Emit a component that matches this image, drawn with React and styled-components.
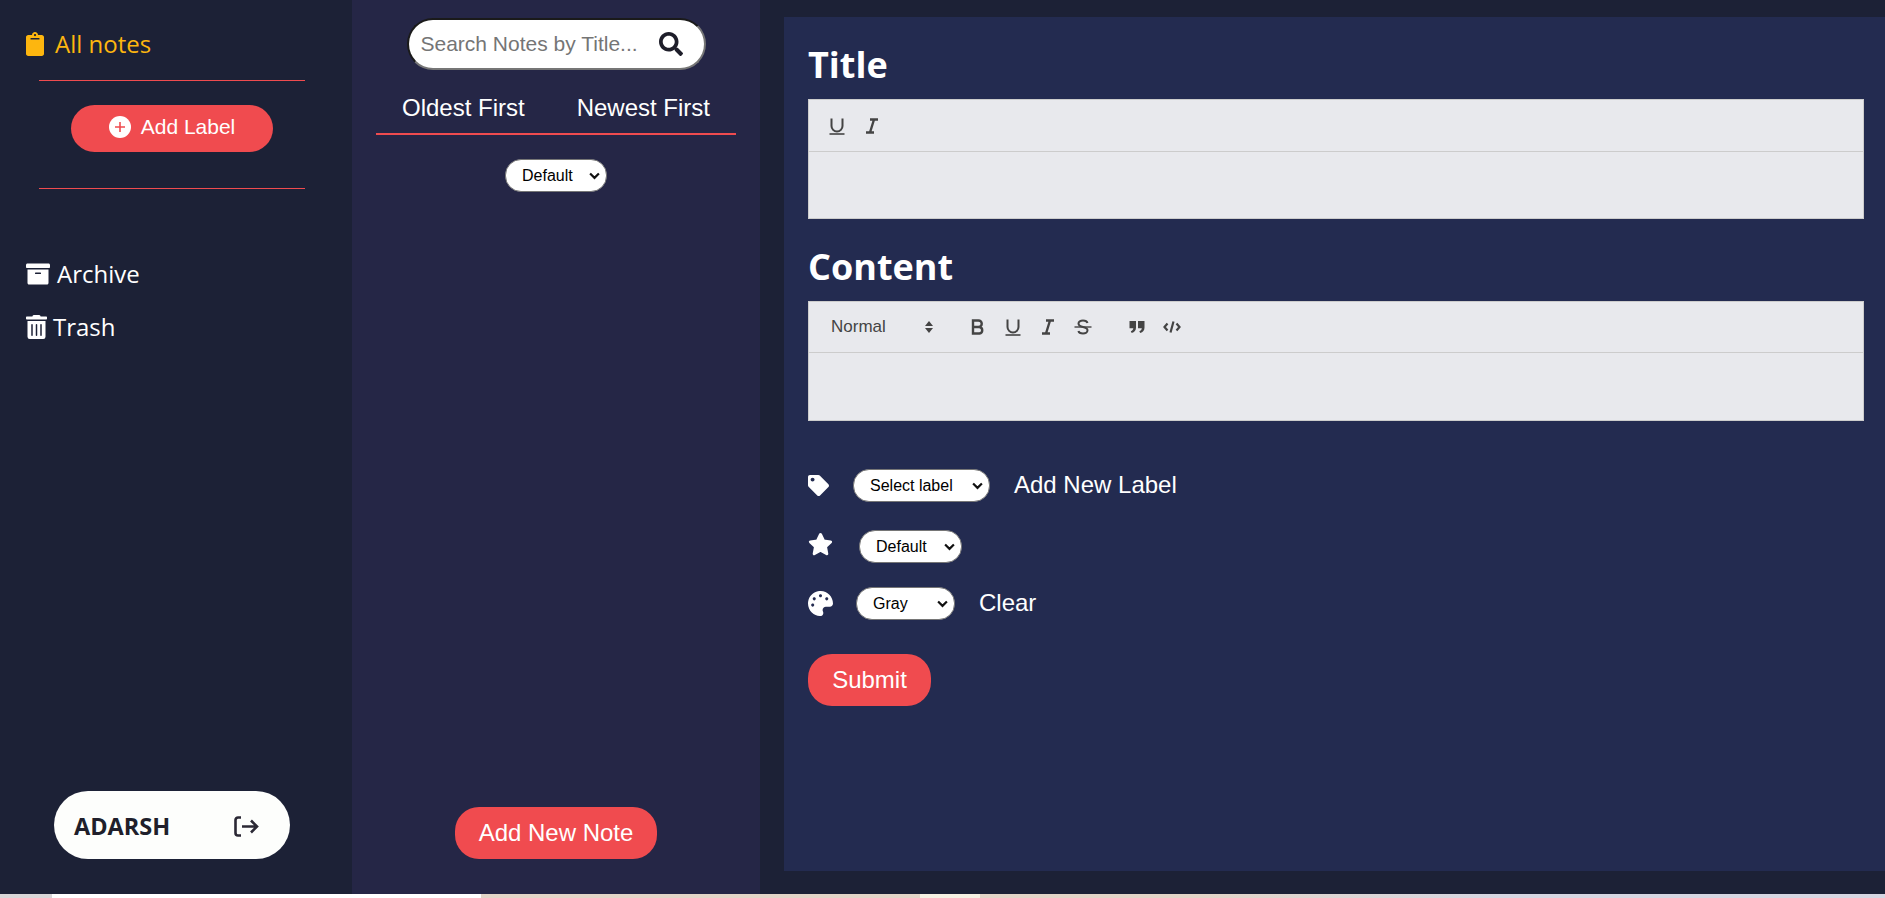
import styled, { createGlobalStyle } from "styled-components";
import {
  FaClipboard,
  FaArchive,
  FaTrashAlt,
  FaSearch,
  FaTag,
  FaPalette,
} from "react-icons/fa";

const chevron =
  "data:image/svg+xml,%3Csvg xmlns='http://www.w3.org/2000/svg' viewBox='0 0 12 8'%3E%3Cpath d='M1.200 1.200 6 6l4.800-4.800' fill='none' stroke='%23111' stroke-width='2.400'/%3E%3C/svg%3E";

const GlobalStyle = createGlobalStyle`
  * {
    box-sizing: border-box;
  }
  html, body {
    margin: 0;
    padding: 0;
    height: 100%;
    overflow: hidden;
    background: #dcd9dc;
    font-family: "Liberation Sans", Arial, sans-serif;
  }
`;

const Page = styled.div`
  display: grid;
  grid-template-columns: 352px 408px 1fr;
  height: 894px;
  background: #1c2136;
  color: #fff;
`;

const Sidebar = styled.aside`
  background: #1c2136;
  display: flex;
  flex-direction: column;
  padding: 27px 0 35px;
`;

const NavItem = styled.div`
  display: flex;
  align-items: center;
  padding-left: 26px;
  gap: ${(p) => p.$gap}px;
  font-family: "Open Sans", sans-serif;
  font-size: 24px;
  line-height: 33px;
  color: ${(p) => (p.$active ? "#fdb60f" : "#fff")};
  margin-top: ${(p) => p.$top || 0}px;

  svg {
    width: ${(p) => p.$iconWidth}px;
    height: 24px;
  }
`;

const Rule = styled.hr`
  width: 266px;
  height: 1px;
  border: 0;
  background: #ef4b4f;
  margin: ${(p) => p.$top}px 0 0 39px;
`;

const RedButton = styled.button`
  border: 0;
  border-radius: ${(p) => p.$radius || 24}px;
  background: #f04b4f;
  color: #fff;
  font-family: "Liberation Sans", Arial, sans-serif;
  font-size: ${(p) => p.$size || 24}px;
  display: inline-flex;
  align-items: center;
  justify-content: center;
  gap: 10px;
  padding: 0 0 ${(p) => p.$lift || 0}px;
  width: ${(p) => p.$w}px;
  height: ${(p) => p.$h}px;
  margin-top: ${(p) => p.$top || 0}px;
`;

const AddLabelRow = styled.div`
  display: flex;
  justify-content: center;
  padding-right: 8px;
`;

const UserPill = styled.div`
  margin: auto 0 0 54px;
  width: 236px;
  height: 68px;
  border-radius: 34px;
  background: #fdfefc;
  color: #201f2b;
  display: flex;
  align-items: center;
  justify-content: space-between;
  padding: 2px 31px 0 20px;
  font-family: "Open Sans", sans-serif;
  font-weight: 700;
  font-size: 23.5px;
`;

const NotesColumn = styled.section`
  background: #252646;
  display: flex;
  flex-direction: column;
  align-items: center;
  padding: 18px 0 35px;
`;

const SearchBox = styled.div`
  width: 299px;
  height: 52px;
  border-radius: 26px;
  background: #fff;
  border: 2px solid;
  border-color: #1a1a1a #767676 #767676 #1a1a1a;
  display: flex;
  align-items: center;
  justify-content: space-between;
  padding: 0 21px 0 12px;
  color: #1e1e2a;
`;

const SearchInput = styled.input`
  border: 0;
  outline: 0;
  width: 225px;
  background: transparent;
  font-family: "Liberation Sans", Arial, sans-serif;
  font-size: 21px;
  padding: 0;
  &::placeholder {
    color: #757575;
    opacity: 1;
  }
`;

const SortTabs = styled.div`
  width: 360px;
  display: flex;
  justify-content: space-between;
  padding: 24px 26px 12px 26px;
  border-bottom: 2px solid #ef4b4f;
  font-size: 24px;
  line-height: 27px;
`;

const PillSelect = styled.select`
  appearance: none;
  border-radius: 16px;
  border: 1px solid #767676;
  background: #fff url("${chevron}") no-repeat right 6px center / 11px 8px;
  color: #000;
  font-family: "Liberation Sans", Arial, sans-serif;
  font-size: 16px;
  height: 33px;
  width: ${(p) => p.$w}px;
  padding: 0 0 0 16px;
  flex: none;
`;

const DefaultFilter = styled(PillSelect)`
  margin-top: 24px;
`;

const AddNoteRow = styled.div`
  margin-top: auto;
`;

const MainArea = styled.main`
  background: #1c2136;
  padding: 17px 0 23px 24px;
  display: flex;
`;

const EditorPanel = styled.div`
  flex: 1;
  background: #232b50;
  padding: 24px 21px 0 24px;
`;

const Heading = styled.h2`
  margin: ${(p) => p.$top || 0}px 0 0;
  font-family: "Open Sans", sans-serif;
  font-weight: 700;
  font-size: 36px;
  line-height: 48px;
  color: #fff;
`;

const Editor = styled.div`
  background: #e8e9ed;
  border: 1px solid #ccc;
  margin-top: 10px;
`;

const Toolbar = styled.div`
  height: ${(p) => p.$h}px;
  border-bottom: 1px solid #ccc;
  display: flex;
  align-items: center;
  padding: 0 0 0 19px;
  color: #444;
`;

const ToolIcon = styled.svg`
  width: 18px;
  height: 18px;
  margin-right: ${(p) => p.$gap || 17}px;
  flex: none;
  fill: none;
  stroke: #444;
  stroke-width: 2;
`;

const HeaderPicker = styled.div`
  width: 106px;
  margin-right: 35px;
  padding-left: 3px;
  display: flex;
  justify-content: space-between;
  align-items: center;
  font-size: 17px;
  color: #444;
`;

const EditArea = styled.div`
  height: ${(p) => p.$h}px;
`;

const OptionRow = styled.div`
  display: flex;
  align-items: center;
  margin-top: ${(p) => p.$top}px;
  font-size: 24px;
`;

const RowIcon = styled.span`
  display: inline-flex;
  width: ${(p) => p.$w}px;
  font-size: ${(p) => p.$size}px;
  margin-top: ${(p) => p.$shift || 0}px;
  flex: none;
`;

const RowLink = styled.span`
  margin: -1px 0 0 24px;
`;

const BottomStrip = styled.div`
  height: 4px;
  background: linear-gradient(
    to right,
    #d9d6d8 0 52px,
    #fff 52px 481px,
    #e3d5c8 481px 920px,
    #f6f1e4 920px 980px,
    #e3d5c8 980px 1200px,
    #d6d6e2 1500px
  );
`;

const UnderlineIcon = () => (
  <ToolIcon viewBox="0 0 18 18">
    <path d="M3.500 1.500v7.500a5.500 5.500 0 0 0 11 0V1.500" />
    <path d="M1.500 17h15" strokeWidth="1.600" />
  </ToolIcon>
);

const ItalicIcon = () => (
  <ToolIcon viewBox="0 0 18 18">
    <path d="M7 2.500h8M3 15.500h8M11 2.500 7 15.500" strokeWidth="2.400" />
  </ToolIcon>
);

const AddCircleIcon = () => (
  <svg width="22" height="22" viewBox="0 0 22 22">
    <circle cx="11" cy="11" r="11" fill="#fff" />
    <path d="M6 11h10M11 6v10" stroke="#f04b4f" strokeWidth="1.600" />
  </svg>
);

const LogoutIcon = () => (
  <svg width="25" height="21" viewBox="0 0 25 21" fill="none" stroke="#2b2935" strokeWidth="2.600">
    <path d="M7 1.500H4A2.500 2.500 0 0 0 1.500 4v13A2.500 2.500 0 0 0 4 19.500h3" />
    <path d="M8 10.500h15M17 4.500l6 6-6 6" />
  </svg>
);

const RoundStarIcon = () => (
  <svg width="25" height="25" viewBox="0 0 25 25" fill="#fff" stroke="#fff" strokeWidth="3" strokeLinejoin="round">
    <path d="M12.500 2.500 15.600 9l7 .9-5.100 4.800 1.300 7-6.300-3.400-6.300 3.400 1.300-7L2.400 9.900l7-.9z" />
  </svg>
);

const App = () => (
  <>
    <GlobalStyle />
    <Page>
      <Sidebar>
        <NavItem $active $gap={11} $iconWidth={18}>
          <FaClipboard />
          All notes
        </NavItem>
        <Rule $top={20} />
        <AddLabelRow>
          <RedButton $w={202} $h={47} $size={21} $top={24} $lift={4}>
            <AddCircleIcon />
            Add Label
          </RedButton>
        </AddLabelRow>
        <Rule $top={36} />
        <NavItem $gap={7} $top={68} $iconWidth={24}>
          <FaArchive />
          Archive
        </NavItem>
        <NavItem $gap={6} $top={20} $iconWidth={21}>
          <FaTrashAlt />
          Trash
        </NavItem>
        <UserPill>
          ADARSH
          <LogoutIcon />
        </UserPill>
      </Sidebar>

      <NotesColumn>
        <SearchBox>
          <SearchInput placeholder="Search Notes by Title..." />
          <FaSearch size={24} />
        </SearchBox>
        <SortTabs>
          <span>Oldest First</span>
          <span>Newest First</span>
        </SortTabs>
        <DefaultFilter $w={102}>
          <option>Default</option>
        </DefaultFilter>
        <AddNoteRow>
          <RedButton $w={202} $h={52}>
            Add New Note
          </RedButton>
        </AddNoteRow>
      </NotesColumn>

      <MainArea>
        <EditorPanel>
          <Heading>Title</Heading>
          <Editor>
            <Toolbar $h={52}>
              <UnderlineIcon />
              <ItalicIcon />
            </Toolbar>
            <EditArea $h={66} />
          </Editor>

          <Heading $top={24}>Content</Heading>
          <Editor>
            <Toolbar $h={51}>
              <HeaderPicker>
                Normal
                <svg width="10" height="14" viewBox="0 0 10 14" fill="#444">
                  <path d="M5 1 9 6H1zM5 13 1 8h8z" />
                </svg>
              </HeaderPicker>
              <ToolIcon viewBox="0 0 18 18">
                <path d="M4 2.500h5.500a3.200 3.200 0 0 1 0 6.500H4zM4 9h6.500a3.300 3.300 0 0 1 0 6.500H4z" strokeWidth="2.400" />
              </ToolIcon>
              <UnderlineIcon />
              <ItalicIcon />
              <ToolIcon viewBox="0 0 18 18" $gap={36}>
                <path d="M.5 9h17" strokeWidth="1.400" />
                <path d="M13.500 5C13 3.400 11.300 2.500 9 2.500 6.400 2.500 4.500 3.600 4.500 5.500S6.400 8.400 9 9c2.800.6 4.500 1.500 4.500 3.300S11.600 15.500 9 15.500C6.500 15.500 4.800 14.500 4.400 13" />
              </ToolIcon>
              <ToolIcon viewBox="0 0 18 18">
                <path
                  d="M1.500 3h6.500v6.500c0 3-1.500 4.800-4.300 5.500l-.9-1.700C4.400 12.700 5.200 11.800 5.300 10.300H1.500zM10 3h6.500v6.500c0 3-1.500 4.800-4.300 5.500l-.9-1.700c1.600-.6 2.400-1.500 2.500-3H10z"
                  fill="#444"
                  stroke="none"
                />
              </ToolIcon>
              <ToolIcon viewBox="0 0 18 18">
                <path d="M4.500 5.500 1.500 9l3 3.500M13.500 5.500l3 3.500-3 3.500M10.500 3.500 7.500 14.500" strokeWidth="2.200" />
              </ToolIcon>
            </Toolbar>
            <EditArea $h={67} />
          </Editor>

          <OptionRow $top={48}>
            <RowIcon $w={45} $size={21}>
              <FaTag />
            </RowIcon>
            <PillSelect $w={137}>
              <option>Select label</option>
            </PillSelect>
            <RowLink>Add New Label</RowLink>
          </OptionRow>
          <OptionRow $top={28}>
            <RowIcon $w={51} $shift={-5}>
              <RoundStarIcon />
            </RowIcon>
            <PillSelect $w={103}>
              <option>Default</option>
            </PillSelect>
          </OptionRow>
          <OptionRow $top={24}>
            <RowIcon $w={48} $size={25}>
              <FaPalette />
            </RowIcon>
            <PillSelect $w={99}>
              <option>Gray</option>
            </PillSelect>
            <RowLink>Clear</RowLink>
          </OptionRow>
          <RedButton $w={123} $h={52} $top={34}>
            Submit
          </RedButton>
        </EditorPanel>
      </MainArea>
    </Page>
    <BottomStrip />
  </>
);

export default App;
